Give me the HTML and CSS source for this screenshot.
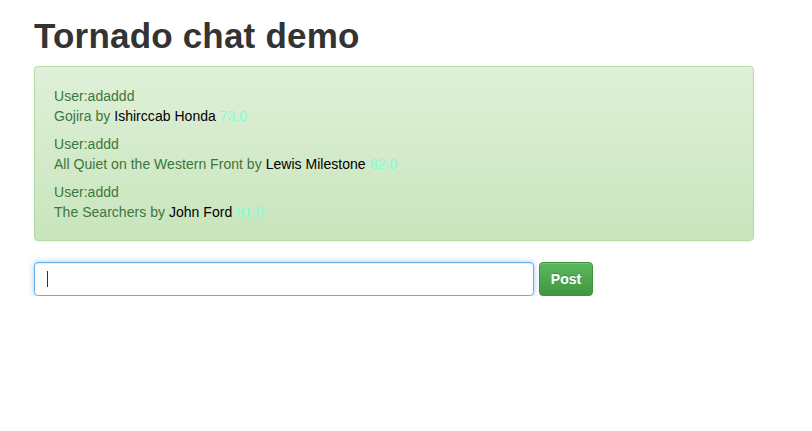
FILE: index.html
```html
<!DOCTYPE html>
<html>
<head>
<meta charset="utf-8">
<title>Tornado chat demo</title>
<link rel="stylesheet" href="styles.css">
</head>
<body>
<div class="container">
  <h1 class="title">Tornado chat demo</h1>
  <div class="inbox">
    <div class="message">
      <div>User:adaddd</div>
      <div>Gojira by <span class="author">Ishirccab Honda</span> <span class="score">73.0</span></div>
    </div>
    <div class="message">
      <div>User:addd</div>
      <div>All Quiet on the Western Front by <span class="author">Lewis Milestone</span> <span class="score">82.0</span></div>
    </div>
    <div class="message">
      <div>User:addd</div>
      <div>The Searchers by <span class="author">John Ford</span> <span class="score">81.0</span></div>
    </div>
  </div>
  <form class="post-form" onsubmit="return false">
    <div class="field">
      <input class="message-input" type="text" name="body" aria-label="Message">
      <span class="caret"></span>
    </div>
    <button class="post-btn" type="submit">Post</button>
  </form>
</div>
</body>
</html>
```

FILE: styles.css
```css
html, body {
  margin: 0;
  padding: 0;
  background: #fff;
}
body {
  font-family: "Liberation Sans", Arial, Helvetica, sans-serif;
  font-size: 14px;
  line-height: 20px;
  color: #333;
}
.container {
  padding: 0 34px;
  width: 720px;
}
.title {
  margin: 17px 0 10px;
  font-size: 35px;
  line-height: 38.5px;
  font-weight: bold;
  letter-spacing: 0.2px;
  color: #333;
  height: 39px;
}
.inbox {
  box-sizing: border-box;
  width: 720px;
  padding: 19px 19px 18px;
  border: 1px solid #b2dba1;
  border-radius: 4px;
  background-image: linear-gradient(to bottom, #dff0d8 0%, #c8e5bc 100%);
  box-shadow: inset 0 1px 0 rgba(255,255,255,.25), 0 1px 2px rgba(0,0,0,.05);
  color: #3c763d;
  margin-bottom: 21px;
  display: flex;
  flex-direction: column;
  gap: 8px;
}
.message {
  letter-spacing: 0.03px;
}
.author {
  color: #000;
}
.score {
  color: #7fffd4;
}
.post-form {
  display: flex;
  gap: 5px;
  margin: 0;
}
.field {
  position: relative;
  width: 500px;
}
.message-input {
  box-sizing: border-box;
  width: 500px;
  height: 34px;
  margin: 0;
  padding: 6px 12px;
  font-family: inherit;
  font-size: 14px;
  border: 1px solid #66afe9;
  border-radius: 4px;
  outline: none;
  background: #fff;
  box-shadow: inset 0 1px 1px rgba(0,0,0,.075), 0 0 6px rgba(102,175,233,.6);
}
.caret {
  position: absolute;
  left: 13px;
  top: 9px;
  width: 1px;
  height: 16px;
  background: #333;
}
.post-btn {
  box-sizing: border-box;
  width: 54px;
  height: 34px;
  margin: 0;
  padding: 0;
  font-family: inherit;
  font-size: 14px;
  font-weight: bold;
  color: #fff;
  text-shadow: 0 -1px 0 rgba(0,0,0,.2);
  border: 1px solid #3e8f3e;
  border-radius: 4px;
  background-image: linear-gradient(to bottom, #5cb85c 0%, #419641 100%);
  box-shadow: inset 0 1px 0 rgba(255,255,255,.15), 0 1px 1px rgba(0,0,0,.075);
  cursor: pointer;
}
```
